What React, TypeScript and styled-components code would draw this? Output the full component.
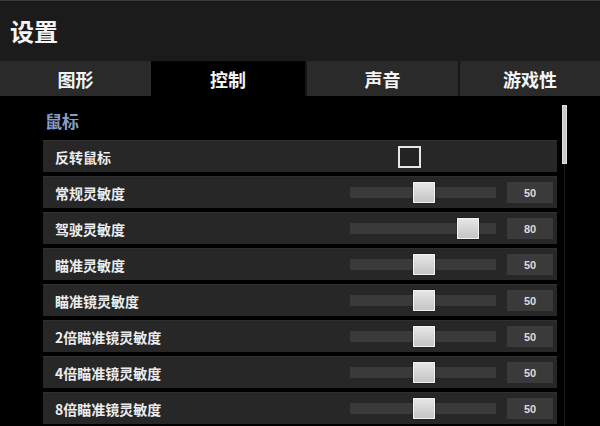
import React from "react";
import styled, { createGlobalStyle } from "styled-components";

const GlobalStyle = createGlobalStyle`
  html, body {
    margin: 0;
    padding: 0;
    background: #000;
    overflow: hidden;
  }
  * {
    box-sizing: border-box;
  }
`;

const Screen = styled.div`
  width: 600px;
  height: 426px;
  background: #000;
  display: flex;
  flex-direction: column;
  overflow: hidden;
  font-family: "Noto Sans CJK SC", "Noto Sans", "Liberation Sans", sans-serif;
  color: #f2f2f2;
`;

const Header = styled.div`
  height: 61px;
  flex: none;
  background: #1b1b1b;
  border-top: 1px solid #3a3a3a;
  display: flex;
  align-items: center;
  padding-left: 10px;
`;

const Title = styled.h1`
  margin: 0;
  font-size: 24px;
  font-weight: 700;
  line-height: 1;
  color: #f4f4f4;
`;

const TabBar = styled.div`
  height: 35px;
  flex: none;
  display: grid;
  grid-template-columns: 151px 154px 153px 1fr;
  background: #141414;
`;

const Tab = styled.div<{ $active?: boolean }>`
  display: flex;
  align-items: center;
  justify-content: center;
  font-size: 18px;
  font-weight: 700;
  color: #f4f4f4;
  background: ${(p) => (p.$active ? "#000" : "#2a2a2a")};
  border-left: ${(p) => (p.$active ? "none" : "2px solid #161616")};
  &:first-child {
    border-left: none;
  }
`;

const Body = styled.div`
  flex: 1;
  display: flex;
  padding-left: 43px;
  overflow: hidden;
`;

const List = styled.div`
  width: 514px;
  padding-top: 10px;
  display: flex;
  flex-direction: column;
  gap: 4px;
`;

const Section = styled.div`
  height: 30px;
  line-height: 30px;
  padding-left: 2px;
  font-size: 17px;
  font-weight: 700;
  color: #8a9dc9;
`;

const Row = styled.div`
  height: 32px;
  flex: none;
  display: grid;
  grid-template-columns: 1fr 146px 46px;
  column-gap: 11px;
  align-items: center;
  padding: 0 4px 0 12px;
  background: #272727;
  border-top: 1px solid #2f2f2f;
`;

const Label = styled.div`
  font-size: 14px;
  font-weight: 700;
  color: #ececec;
  white-space: nowrap;
`;

const Checkbox = styled.div`
  width: 23px;
  height: 22px;
  margin-left: 48px;
  border: 2px solid #e6e6e6;
  background: #232323;
`;

const Track = styled.div`
  position: relative;
  height: 11px;
  background: #3a3a3a;
`;

const Thumb = styled.div`
  position: absolute;
  top: -5px;
  width: 22px;
  height: 21px;
  background: linear-gradient(#e6e6e6, #c4c4c4);
  border: 1px solid #f2f2f2;
  box-shadow: 0 0 1px #000;
`;

const ValueBox = styled.div`
  height: 21px;
  display: flex;
  align-items: center;
  justify-content: center;
  background: #3a3a3a;
  font-family: "Liberation Sans", "DejaVu Sans", sans-serif;
  font-size: 11px;
  font-weight: 700;
  color: #dcdcdc;
`;

const ScrollColumn = styled.div`
  margin-left: 4px;
  width: 6px;
  padding-top: 9px;
  display: flex;
  flex-direction: column;
  align-items: center;
`;

const ScrollThumb = styled.div`
  width: 5px;
  height: 59px;
  flex: none;
  background: #c9c9c9;
  border: 1px solid #e0e0e0;
`;

const ScrollTrack = styled.div`
  width: 1px;
  flex: 1;
  background: #1c1c1c;
`;

type Setting = { label: string; value: number };

const sliders: Setting[] = [
  { label: "常规灵敏度", value: 50 },
  { label: "驾驶灵敏度", value: 80 },
  { label: "瞄准灵敏度", value: 50 },
  { label: "瞄准镜灵敏度", value: 50 },
  { label: "2倍瞄准镜灵敏度", value: 50 },
  { label: "4倍瞄准镜灵敏度", value: 50 },
  { label: "8倍瞄准镜灵敏度", value: 50 },
];

function SliderRow({ label, value }: Setting) {
  return (
    <Row>
      <Label>{label}</Label>
      <Track>
        <Thumb style={{ left: `calc(${value}% - 10px)` }} />
      </Track>
      <ValueBox>{value}</ValueBox>
    </Row>
  );
}

export default function App() {
  return (
    <Screen>
      <GlobalStyle />
      <Header>
        <Title>设置</Title>
      </Header>
      <TabBar>
        <Tab>图形</Tab>
        <Tab $active>控制</Tab>
        <Tab>声音</Tab>
        <Tab>游戏性</Tab>
      </TabBar>
      <Body>
        <List>
          <Section>鼠标</Section>
          <Row>
            <Label>反转鼠标</Label>
            <Checkbox />
          </Row>
          {sliders.map((s) => (
            <SliderRow key={s.label} {...s} />
          ))}
        </List>
        <ScrollColumn>
          <ScrollThumb />
          <ScrollTrack />
        </ScrollColumn>
      </Body>
    </Screen>
  );
}
